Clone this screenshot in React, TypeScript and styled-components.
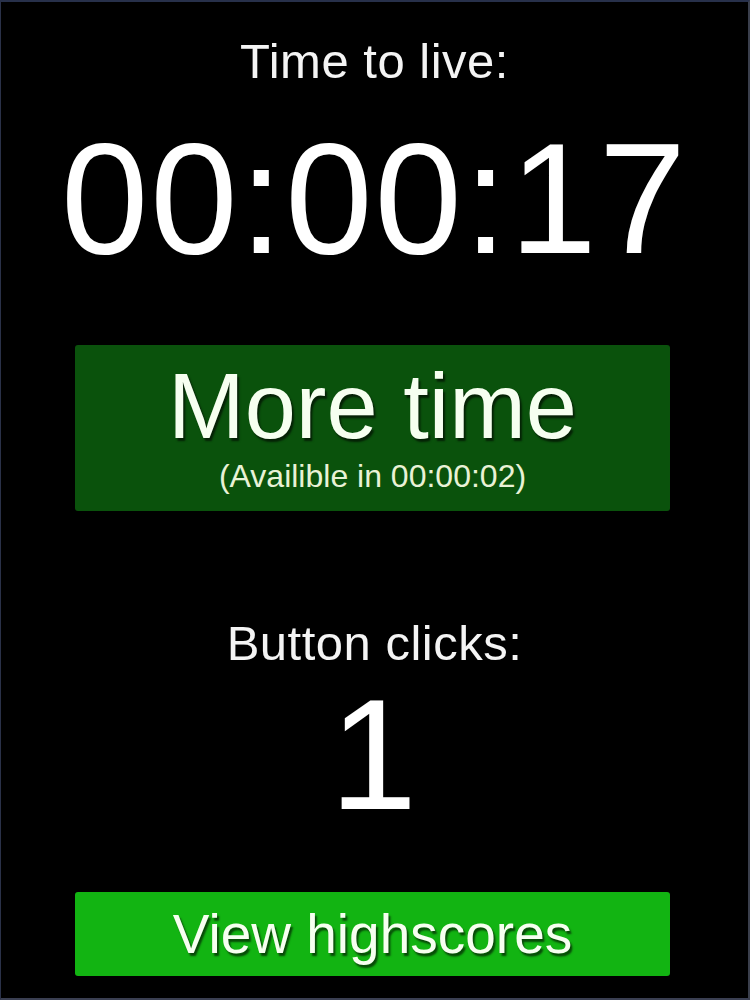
import styled, { createGlobalStyle } from 'styled-components';

const GlobalStyle = createGlobalStyle`
    html, body {
        margin: 0;
        padding: 0;
        background-color: #000;
    }
    * {
        box-sizing: border-box;
    }
`;

const Screen = styled.div`
    width: 750px;
    height: 1000px;
    background-color: #000;
    border-top: 2px solid #27304a;
    border-left: 1px solid #2a3148;
    border-right: 2px solid #3a3f4c;
    border-bottom: 2px solid #3a3f52;
    display: flex;
    flex-direction: column;
    align-items: center;
    font-family: 'Liberation Sans', Arial, sans-serif;
    color: #fff;
    overflow: hidden;
`;

const Label = styled.div<{ top: number }>`
    margin-top: ${(props) => props.top}px;
    font-size: 49px;
    line-height: 1;
    letter-spacing: 0.5px;
    color: #f4f4f4;
`;

const BigNumber = styled.div<{ top: number }>`
    margin-top: ${(props) => props.top}px;
    font-size: 157px;
    line-height: 1;
    letter-spacing: 2px;
    color: #fff;
`;

const Button = styled.button<{ variant: 'dark' | 'bright' }>`
    width: 595px;
    margin-right: 4px;
    border: none;
    border-radius: 3px;
    font-family: inherit;
    color: #f6fff0;
    cursor: pointer;
    display: flex;
    flex-direction: column;
    align-items: center;
    justify-content: center;
    background-color: ${(props) =>
        props.variant === 'dark' ? '#0a520c' : '#12b412'};
    text-shadow: 2px 3px 2px rgba(0, 0, 0, 0.6);
`;

const MoreTimeButton = styled(Button)`
    margin-top: 68px;
    height: 166px;
    padding: 16px 0 20px;
`;

const HighscoresButton = styled(Button)`
    margin-top: 59px;
    height: 84px;
    padding: 0;
`;

const ButtonTitle = styled.span<{ size: number }>`
    font-size: ${(props) => props.size}px;
    line-height: 1;
`;

const ButtonNote = styled.span`
    margin-top: 8px;
    font-size: 32px;
    line-height: 1;
    color: #e9f2d6;
    text-shadow: none;
`;

function App() {
    const timeToLive = '00:00:17';
    const availableIn = '00:00:02';
    const clicks = 1;

    return (
        <>
            <GlobalStyle />
            <Screen>
                <Label top={35}>Time to live:</Label>
                <BigNumber top={34}>{timeToLive}</BigNumber>
                <MoreTimeButton variant='dark'>
                    <ButtonTitle size={92}>More time</ButtonTitle>
                    <ButtonNote>(Availible in {availableIn})</ButtonNote>
                </MoreTimeButton>
                <Label top={108}>Button clicks:</Label>
                <BigNumber top={8}>{clicks}</BigNumber>
                <HighscoresButton variant='bright'>
                    <ButtonTitle size={55}>View highscores</ButtonTitle>
                </HighscoresButton>
            </Screen>
        </>
    );
}

export default App;
